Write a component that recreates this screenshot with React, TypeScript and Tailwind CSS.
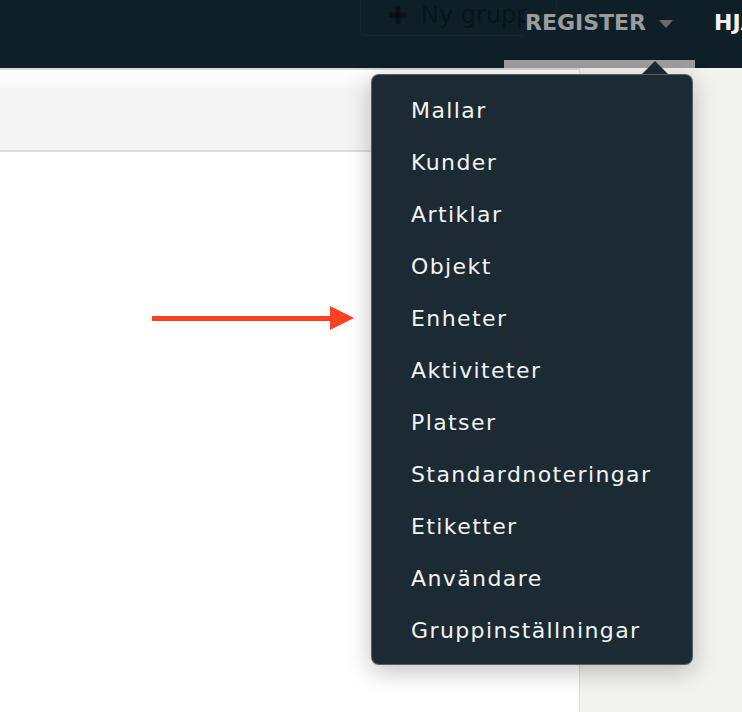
import React from "react";

const items = [
  "Mallar",
  "Kunder",
  "Artiklar",
  "Objekt",
  "Enheter",
  "Aktiviteter",
  "Platser",
  "Standardnoteringar",
  "Etiketter",
  "Användare",
  "Gruppinställningar",
];

export default function App() {
  return (
    <div
      className="relative w-full h-[712px] overflow-hidden bg-white"
      style={{ fontFamily: '"DejaVu Sans", sans-serif' }}
    >
      {/* Header */}
      <header className="relative h-[68px] bg-[#0f1f28] flex">
        <div className="absolute left-[360px] top-[-14px] w-[197px] h-[50px] border border-[#16262f] rounded-[4px] flex items-center pl-[26px] gap-[12px] pt-[8px] text-black/40">
          <svg width="22" height="18" viewBox="0 0 22 18" fill="currentColor">
            <rect x="8.5" y="0" width="5" height="18" />
            <rect x="2" y="6.5" width="18" height="5" />
          </svg>
          <span className="text-[24px] leading-none">Ny grupp</span>
        </div>
        <div className="relative ml-[504px] w-[191px] shrink-0 h-full flex flex-col">
          <div className="flex-1 flex items-start pt-[10px] pl-[21px] gap-[13px]">
            <span className="text-[22px] font-bold text-[#9b9b9b] leading-[26px] bg-[#0f1f28]">REGISTER</span>
            <svg width="14" height="8" viewBox="0 0 14 8" className="mt-[10px]">
              <polygon points="0,0 14,0 7,8" fill="#6b6b6b" />
            </svg>
          </div>
          <div className="h-[8px] bg-[#9e9e9e]" />
        </div>
        <div className="pl-[19px] pt-[10px] shrink-0">
          <span className="text-[22px] font-bold text-[#f2f2f2] leading-[26px] whitespace-nowrap">HJÄLP</span>
        </div>
      </header>

      {/* Body */}
      <div className="flex h-[644px]">
        <div className="w-[580px] shrink-0 border-r border-[#dcdcdc] flex flex-col">
          <div className="h-[2px] bg-[#d9d9d9]" />
          <div className="h-[18px] bg-gradient-to-b from-white to-[#f7f7f7]" />
          <div className="h-[64px] bg-[#f4f4f4] border-b-2 border-[#dcdcdc]" />
          <div className="flex-1 bg-white" />
        </div>
        <div className="flex-1 bg-[#f3f3ee]" />
      </div>

      {/* Arrow annotation */}
      <div className="absolute left-[152px] top-[306px] flex items-center">
        <div className="w-[180px] h-[5px] bg-[#fe4121]" />
        <svg width="24" height="24" viewBox="0 0 24 24" className="-ml-[2px]">
          <polygon points="0,0 24,12 0,24" fill="#fe4121" />
        </svg>
      </div>

      {/* Dropdown menu */}
      <svg width="28" height="14" viewBox="0 0 28 14" className="absolute left-[641px] top-[61px]">
        <polygon points="14,0 28,14 0,14" fill="#1b2a33" />
      </svg>
      <div className="absolute left-[371px] top-[74px] w-[322px] h-[591px] bg-[#1b2a33] rounded-[8px] border border-[#7d8387]/60 shadow-[0_6px_24px_rgba(0,0,0,0.25)] pt-[9px] pb-[9px]">
        {items.map((t) => (
          <div
            key={t}
            className="h-[52px] flex items-center pl-[39px] text-[22px] tracking-[1.4px] text-[#f2f4f5] whitespace-nowrap"
          >
            {t}
          </div>
        ))}
      </div>
    </div>
  );
}
